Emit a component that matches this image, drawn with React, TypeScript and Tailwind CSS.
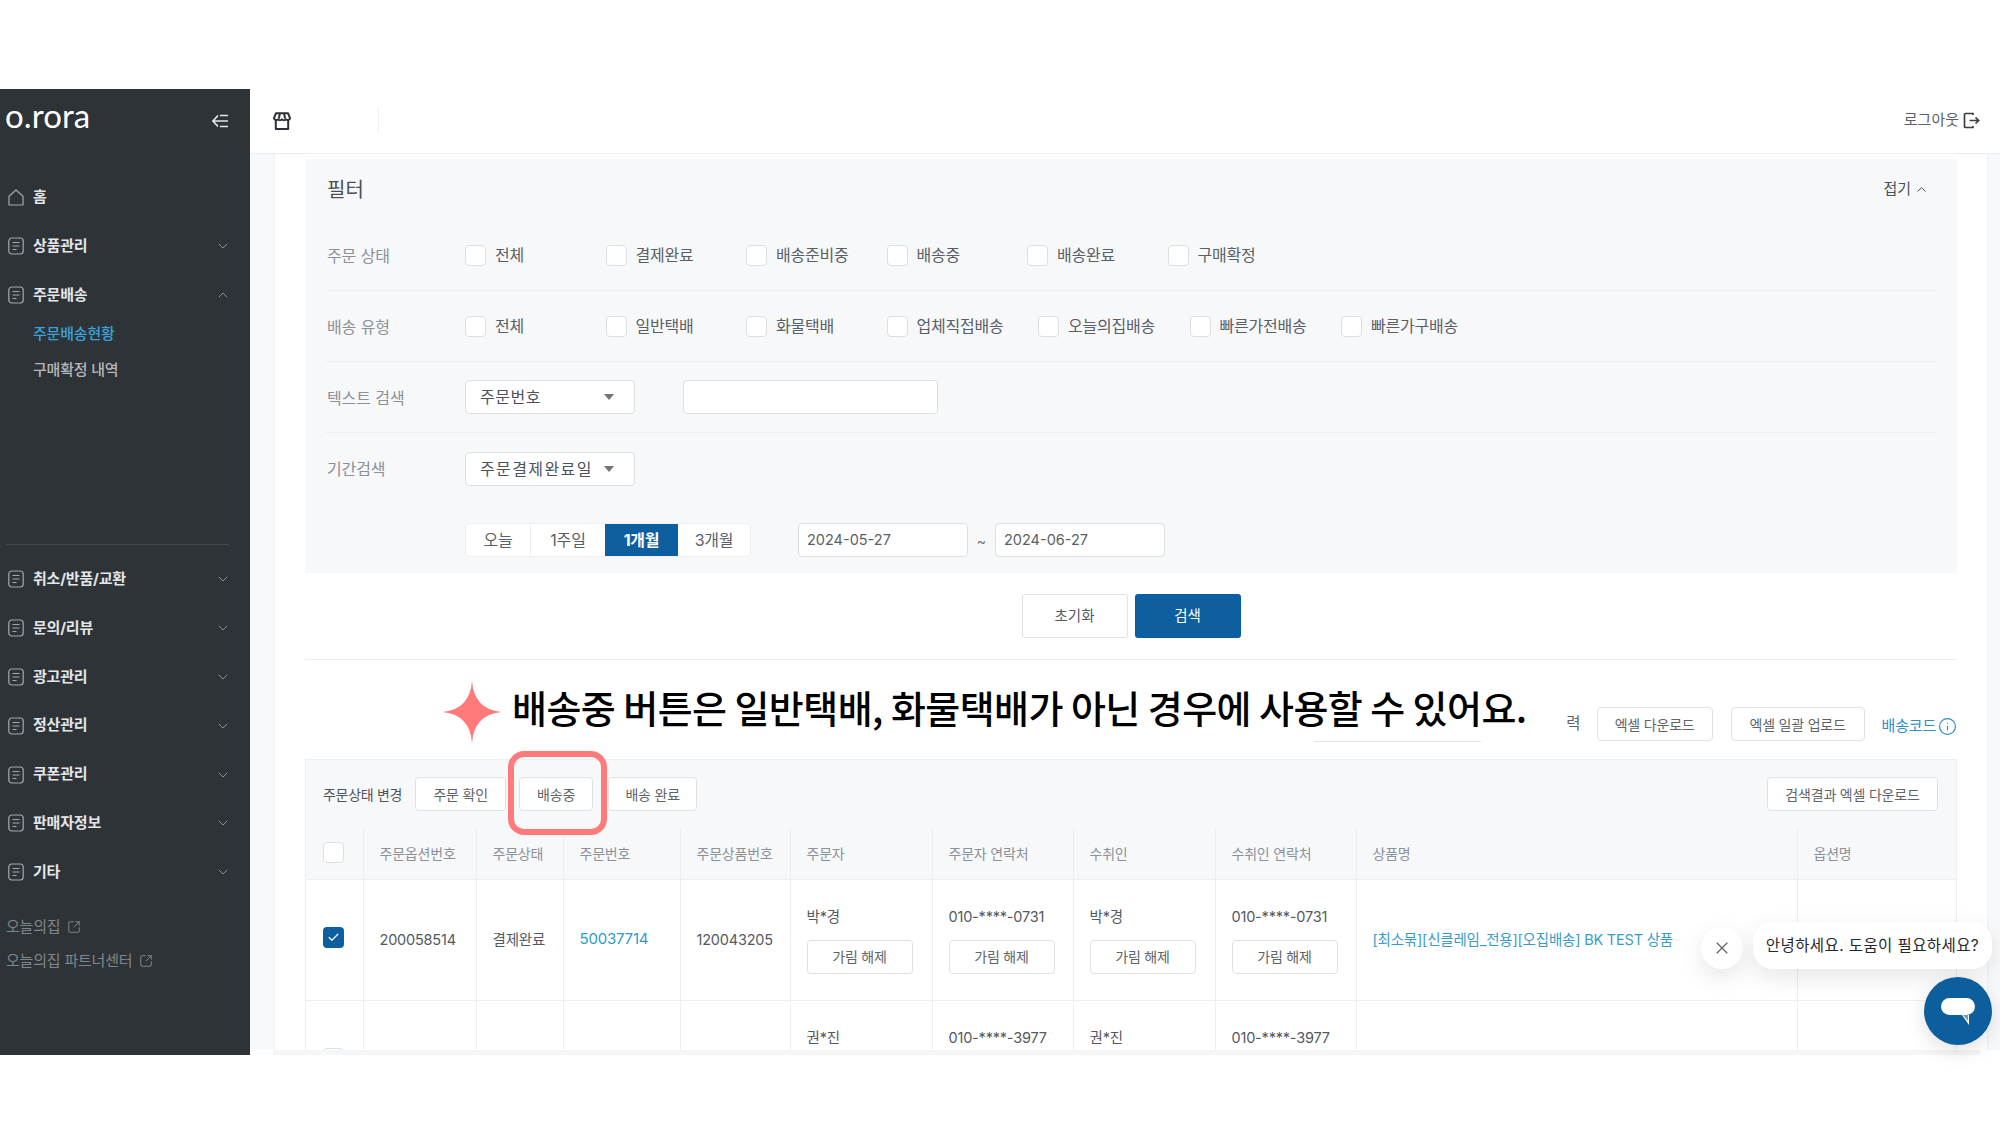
import { ChevronDown, ChevronUp, Check, Info, SquareArrowOutUpRight, X } from 'lucide-react'

function DocIcon() {
  return (
    <svg width="16" height="18" viewBox="0 0 16 18" fill="none" stroke="#a3a8ad" strokeWidth="1.2" className="shrink-0">
      <rect x="0.8" y="1" width="14.4" height="16" rx="3" />
      <path d="M4.5 5.5h7M4.5 9h7M4.5 12.5h4" />
    </svg>
  )
}

function HomeIcon() {
  return (
    <svg width="16" height="17" viewBox="0 0 16 17" fill="none" stroke="#a3a8ad" strokeWidth="1.2" className="shrink-0">
      <path d="M1 7.2 8 1l7 6.2V16H1z" strokeLinejoin="round" />
    </svg>
  )
}

function MenuRow({ label, open }: { label: string; open?: boolean }) {
  return (
    <div className="flex items-center h-[24px] pl-[8px] pr-[19px]">
      <DocIcon />
      <span className="ml-[9px] flex-1 text-[15px] font-bold text-[#e4e6e8] tracking-[-0.2px]">{label}</span>
      {open
        ? <ChevronUp className="w-[16px] h-[16px] text-[#8b9096]" strokeWidth={1.5} />
        : <ChevronDown className="w-[16px] h-[16px] text-[#8b9096]" strokeWidth={1.5} />}
    </div>
  )
}

function Sidebar() {
  return (
    <aside className="w-[250px] shrink-0 bg-[#2e3338] flex flex-col">
      <div className="flex items-center justify-between h-[52px] pl-[5px] pr-[21px]">
        <span className="text-[33px] leading-none text-white font-normal font-['Lato',sans-serif] tracking-[0.1px]">o.rora</span>
        <svg width="17" height="14" viewBox="0 0 17 14" fill="none" stroke="#e4e6e8" strokeWidth="1.7" className="mt-[12px]">
          <path d="M6 1.5 1 7l5 5.500M1.500 7H16M8 1.500h8M8 12.500h8" />
        </svg>
      </div>
      <div className="flex items-center h-[24px] mt-[44px] pl-[8px]">
        <HomeIcon />
        <span className="ml-[9px] text-[15px] font-bold text-[#e4e6e8]">홈</span>
      </div>
      <div className="mt-[25px] flex flex-col gap-[25px]">
        <MenuRow label="상품관리" />
        <MenuRow label="주문배송" open />
      </div>
      <div className="mt-[15px] pl-[33px] text-[15px] font-medium text-[#38a3d6] tracking-[-0.2px] leading-[24px]">주문배송현황</div>
      <div className="mt-[12px] pl-[33px] text-[15px] font-medium text-[#b4b8bc] tracking-[-0.2px] leading-[24px]">구매확정 내역</div>
      <div className="mt-[162px] mx-[6px] mr-[21px] border-t border-[#43484d]" />
      <div className="mt-[22px] flex flex-col gap-[24.9px]">
        {['취소/반품/교환', '문의/리뷰', '광고관리', '정산관리', '쿠폰관리', '판매자정보', '기타'].map(m => (
          <MenuRow key={m} label={m} />
        ))}
      </div>
      <div className="mt-[31px] pl-[6px] flex flex-col gap-[10px] text-[15px] text-[#81868b] tracking-[-0.2px]">
        <div className="flex items-center gap-[7px] h-[24px]">오늘의집 <SquareArrowOutUpRight className="w-[14px] h-[14px]" strokeWidth={1.7} /></div>
        <div className="flex items-center gap-[7px] h-[24px]">오늘의집 파트너센터 <SquareArrowOutUpRight className="w-[14px] h-[14px]" strokeWidth={1.7} /></div>
      </div>
    </aside>
  )
}

function TopBar() {
  return (
    <header className="h-[65px] shrink-0 border-b border-[#eceef0] bg-white flex items-center pl-[23px] pr-[20px]">
      <svg width="18" height="18" viewBox="0 0 18 18" fill="none" stroke="#2b3035" strokeWidth="2">
        <path d="M3 1.200h12l2 5a2.400 2.400 0 0 1-4 1.200 2.800 2.800 0 0 1-4 0 2.800 2.800 0 0 1-4 0 2.400 2.400 0 0 1-4-1.200zM2.800 8v9h12.400V8M6.800 1.500 6 6.500M11.200 1.500l.8 5" strokeLinejoin="round" />
      </svg>
      <div className="ml-[87px] h-[25px] w-px bg-[#eeeff1] mb-[4px]" />
      <div className="ml-auto flex items-center gap-[4px] mb-[1px] text-[15px] text-[#5c6167]">
        로그아웃
        <svg width="17" height="17" viewBox="0 0 17 17" fill="none" stroke="#3a3f44" strokeWidth="1.7">
          <path d="M10 3V1.500H2.500a1 1 0 0 0-1 1v12a1 1 0 0 0 1 1H10V14M6.500 8.500h9M12.500 5.500l3.200 3-3.200 3" />
        </svg>
      </div>
    </header>
  )
}

function Box({ checked }: { checked?: boolean }) {
  return checked ? (
    <span className="w-[21px] h-[21px] shrink-0 rounded-[4px] bg-[#0d5f9f] flex items-center justify-center">
      <Check className="w-[13px] h-[13px] text-white" strokeWidth={2.2} />
    </span>
  ) : (
    <span className="block w-[21px] h-[21px] shrink-0 rounded-[4px] border border-[#dcdfe3] bg-white" />
  )
}

function CheckItem({ label, wide }: { label: string; wide?: boolean }) {
  return (
    <label className={`flex items-center gap-[9px] ${wide ? 'w-[151.5px]' : 'w-[140.5px]'}`}>
      <Box />
      <span className="pb-[1px] text-[16px] text-[#5a5f65] tracking-[-0.2px]">{label}</span>
    </label>
  )
}

function Select({ label, spread }: { label: string; spread?: boolean }) {
  return (
    <div className={`w-[170px] h-[34px] rounded-[4px] border border-[#dcdfe3] bg-white flex items-center justify-between pl-[14px] pr-[20px] text-[16px] text-[#4d5258] ${spread ? 'tracking-[1.4px]' : 'tracking-[0.5px]'}`}>
      {label}
      <span className="w-0 h-0 border-x-[5px] border-x-transparent border-t-[6px] border-t-[#6f757b]" />
    </div>
  )
}

function FilterRow({ label, children, last }: { label: string; children: React.ReactNode; last?: boolean }) {
  return (
    <div className={`flex items-center h-[71px] ${last ? '' : 'border-b border-[#eceef1]'}`}>
      <div className="w-[139px] pl-[1px] pt-[1px] text-[16px] text-[#8c9198] tracking-[-0.1px]">{label}</div>
      {children}
    </div>
  )
}

function DateBox({ value }: { value: string }) {
  return <div className="w-[170px] h-[34px] rounded-[4px] border border-[#dcdfe3] bg-white flex items-center pl-[8px] text-[14.5px] text-[#5a5f65]">{value}</div>
}

function FilterPanel() {
  return (
    <section className="bg-[#f7f8fa] h-[414px] px-[21px]">
      <div className="flex items-center justify-between h-[61px] pr-[7px] pl-[1px]">
        <h2 className="text-[20px] text-[#4a4f55]">필터</h2>
        <div className="flex items-center gap-[3px] text-[15px] text-[#4a4f55]">접기 <ChevronUp className="w-[15px] h-[15px]" strokeWidth={1.6} /></div>
      </div>
      <FilterRow label="주문 상태">
        {['전체', '결제완료', '배송준비중', '배송중', '배송완료', '구매확정'].map(l => <CheckItem key={l} label={l} />)}
      </FilterRow>
      <FilterRow label="배송 유형">
        {['전체', '일반택배', '화물택배'].map(l => <CheckItem key={l} label={l} />)}
        {['업체직접배송', '오늘의집배송', '빠른가전배송', '빠른가구배송'].map(l => <CheckItem key={l} label={l} wide />)}
      </FilterRow>
      <FilterRow label="텍스트 검색">
        <Select label="주문번호" />
        <div className="ml-[48px] w-[255px] h-[34px] rounded-[4px] border border-[#dcdfe3] bg-white" />
      </FilterRow>
      <FilterRow label="기간검색" last>
        <Select label="주문결제완료일" spread />
      </FilterRow>
      <div className="flex items-center pl-[139px] pt-[19px]">
        <div className="flex h-[34px] rounded-[4px] border border-[#eceef1] bg-white text-[16px] text-[#5a5f65] tracking-[-0.2px]">
          <span className="w-[65px] flex items-center justify-center border-r border-[#eceef1]">오늘</span>
          <span className="w-[74px] flex items-center justify-center">1주일</span>
          <span className="w-[73px] flex items-center justify-center bg-[#0d5f9f] text-white font-bold">1개월</span>
          <span className="w-[72px] flex items-center justify-center">3개월</span>
        </div>
        <div className="ml-[47px]"><DateBox value="2024-05-27" /></div>
        <span className="w-[27px] text-center text-[14px] text-[#6b7076]">~</span>
        <DateBox value="2024-06-27" />
      </div>
    </section>
  )
}

function OutlineBtn({ label, w }: { label: string; w: string }) {
  return (
    <button className={`${w} h-[34px] rounded-[4px] border border-[#dfe2e5] bg-white text-[14px] text-[#5f6469] tracking-[-0.2px] flex items-center justify-center`}>
      {label}
    </button>
  )
}

function Banner() {
  return (
    <div className="absolute left-[138px] top-[20px] flex items-center bg-white h-[64px]">
      <svg width="58" height="62" viewBox="0 0 58 62" fill="#ff7b7b" className="shrink-0">
        <path d="M29 0Q31 28 58 31 31 34 29 62 27 34 0 31 27 28 29 0z" />
      </svg>
      <span className="ml-[11px] pb-[11px] text-[38px] font-medium text-black whitespace-nowrap tracking-[-0.55px] font-['Noto_Sans_CJK_KR',sans-serif]">
        배송중 버튼은 일반택배, 화물택배가 아닌 경우에 사용할 수 있어요.
      </span>
    </div>
  )
}

const th = 'border-r border-[#eceef1] px-[16px] text-left font-normal text-[14px] text-[#8c9198] tracking-[-0.2px] whitespace-nowrap'
const td = 'border-r border-[#eceef1] px-[16px] text-[14.5px] text-[#54595f] tracking-[-0.2px] whitespace-nowrap'

function Contact({ value, button }: { value: string; button?: boolean }) {
  return (
    <td className={`${td} align-top pt-[27px]`}>
      <div className="h-[20px] leading-[20px]">{value}</div>
      {button && <div className="mt-[13px]"><OutlineBtn label="가림 해제" w="w-[106px]" /></div>}
    </td>
  )
}

function OrderTable() {
  const headers = ['주문옵션번호', '주문상태', '주문번호', '주문상품번호', '주문자', '주문자 연락처', '수취인', '수취인 연락처', '상품명', '옵션명']
  return (
    <div className="h-[222px] overflow-hidden border-x border-[#eceef1]">
      <table className="table-fixed w-[1652px] border-collapse">
        <colgroup>
          <col className="w-[57px]" /><col className="w-[113px]" /><col className="w-[87px]" /><col className="w-[117px]" />
          <col className="w-[110px]" /><col className="w-[142px]" /><col className="w-[141px]" /><col className="w-[142px]" />
          <col className="w-[141px]" /><col className="w-[441px]" /><col className="w-[161px]" />
        </colgroup>
        <thead>
          <tr className="h-[51px] bg-[#f7f8fa] border-b border-[#eceef1]">
            <th className={`${th} !pl-[17px]`}><div className="pb-[2px]"><Box /></div></th>
            {headers.map(h => <th key={h} className={th}>{h}</th>)}
          </tr>
        </thead>
        <tbody>
          <tr className="h-[121px] border-b border-[#eceef1]">
            <td className={`${td} !pl-[17px]`}><div className="mb-[4px]"><Box checked /></div></td>
            <td className={td}>200058514</td>
            <td className={td}>결제완료</td>
            <td className={`${td} !text-[15px] !text-[#2e9ac6]`}>50037714</td>
            <td className={td}>120043205</td>
            <Contact value="박*경" button />
            <Contact value="010-****-0731" button />
            <Contact value="박*경" button />
            <Contact value="010-****-0731" button />
            <td className={`${td} !text-[#3a9cc6]`}>[최소묶][신클레임_전용][오집배송] BK TEST 상품</td>
            <td className={td} />
          </tr>
          <tr className="h-[121px]">
            <td className={`${td} !pl-[17px]`}><div className="mb-[4px]"><Box /></div></td>
            <td className={td} />
            <td className={td} />
            <td className={td} />
            <td className={td} />
            <Contact value="권*진" />
            <Contact value="010-****-3977" />
            <Contact value="권*진" />
            <Contact value="010-****-3977" />
            <td className={td} />
            <td className={td} />
          </tr>
        </tbody>
      </table>
    </div>
  )
}

function ChatWidget() {
  return (
    <>
      <div className="absolute left-[1701px] top-[927px] w-[42px] h-[42px] rounded-full bg-white shadow-[0_8px_24px_rgba(0,0,0,0.1)] flex items-center justify-center">
        <X className="w-[20px] h-[20px] text-[#5f6469]" strokeWidth={1.4} />
      </div>
      <div className="absolute left-[1753px] top-[922px] w-[239px] h-[47px] rounded-[20px] bg-white shadow-[0_8px_24px_rgba(0,0,0,0.1)] flex items-center justify-center text-[15.5px] text-[#26292c] tracking-[0.4px]">
        안녕하세요. 도움이 필요하세요?
      </div>
      <div className="absolute left-[1924px] top-[977px] w-[68px] h-[68px] rounded-full bg-[#0c5f9c] shadow-[0_6px_20px_rgba(0,0,0,0.12)] flex items-center justify-center">
        <svg width="34" height="27" viewBox="0 0 34 27" fill="none">
          <rect width="34" height="17" rx="8.500" fill="#fff" />
          <path d="M21 17h7v10z" fill="#fff" />
          <path d="M22 17h5v6z" fill="#0c5f9c" opacity="0.6" />
        </svg>
      </div>
    </>
  )
}

export default function App() {
  return (
    <div className="relative w-[2000px] h-[1125px] overflow-hidden bg-white font-['Inter','Noto_Sans_CJK_KR',sans-serif]">
      <div className="h-[89px]" />
      <div className="flex h-[966px]">
        <Sidebar />
        <div className="flex-1 flex flex-col min-w-0">
          <TopBar />
          <div className="flex h-[896px]">
            <div className="w-[25px] bg-[#f8f9fa] border-r border-[#f1f2f4]" />
            <main className="w-[1712px] px-[30px] pt-[5px] bg-white">
              <FilterPanel />
              <div className="mt-[21px] flex justify-center gap-[7px]">
                <button className="w-[106px] h-[44px] rounded-[3px] border border-[#e0e3e6] bg-white text-[14.5px] text-[#54595f]">초기화</button>
                <button className="w-[106px] h-[44px] rounded-[3px] bg-[#0d5f9f] text-[14.5px] text-white">검색</button>
              </div>
              <div className="mt-[21px] border-t border-[#eceef1]" />
              <div className="relative h-[99px] flex items-start justify-end pt-[47px]">
                <span className="text-[15.5px] text-[#5f6469] mr-[16px] mt-[5px]">력</span>
                <OutlineBtn label="엑셀 다운로드" w="w-[116px]" />
                <div className="ml-[18px]"><OutlineBtn label="엑셀 일괄 업로드" w="w-[134px]" /></div>
                <div className="ml-[17px] flex items-center gap-[2px] mt-[8px] text-[15px] text-[#2e8fc4] tracking-[-0.2px]">
                  배송코드 <Info className="w-[19px] h-[19px]" strokeWidth={1.5} />
                </div>
                <Banner />
                <div className="absolute left-[1009px] top-[81px] w-[167px] border-t border-[#e3e5e8]" />
              </div>
              <div className="relative h-[69px] bg-[#f7f8fa] border border-b-0 border-[#eceef1] flex items-center pl-[17px] pr-[18px]">
                <span className="text-[14px] text-[#4f5459] tracking-[-0.3px] mr-[13px]">주문상태 변경</span>
                <OutlineBtn label="주문 확인" w="w-[91px]" />
                <div className="ml-[13px]"><OutlineBtn label="배송중" w="w-[74px]" /></div>
                <div className="ml-[15px]"><OutlineBtn label="배송 완료" w="w-[89px]" /></div>
                <div className="ml-auto"><OutlineBtn label="검색결과 엑셀 다운로드" w="w-[171px]" /></div>
                <div className="absolute left-[202px] top-[-9px] w-[99px] h-[84px] rounded-[16px] border-[6px] border-[#ff7b7b]" />
              </div>
              <OrderTable />
            </main>
            <div className="flex-1 bg-[#f8f9fa] border-l border-[#f1f2f4]" />
          </div>
          <div className="h-[5px] bg-[#f5f6f8] ml-[23px] mr-[20px]" />
        </div>
      </div>
      <ChatWidget />
    </div>
  )
}
